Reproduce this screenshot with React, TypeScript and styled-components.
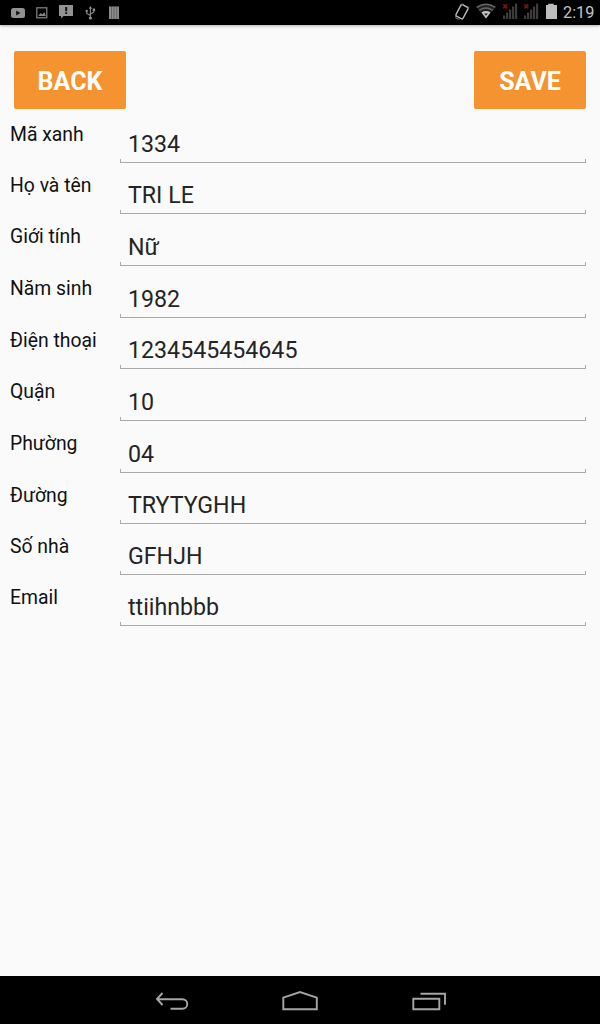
import React from "react";
import styled, { createGlobalStyle } from "styled-components";

const GlobalStyle = createGlobalStyle`
  *, *::before, *::after { box-sizing: border-box; }
  body { margin: 0; background: #fafafa; }
`;

const Screen = styled.div`
  display: flex;
  flex-direction: column;
  width: 600px;
  height: 1024px;
  background: #fafafa;
  font-family: Roboto, sans-serif;
`;

const StatusBar = styled.header`
  display: flex;
  justify-content: space-between;
  flex: none;
  height: 25px;
  background: #000;
  box-shadow: 0 1px 3px rgba(0, 0, 0, 0.3);
`;

const StatusIcons = styled.svg`
  display: block;
  height: 25px;
`;

const StatusGroup = styled.div`
  display: flex;
`;

const Clock = styled.span`
  width: 37px;
  color: #c4c4c4;
  font-size: 16.3px;
  line-height: 25px;
`;

const Toolbar = styled.div`
  display: flex;
  justify-content: space-between;
  padding: 26px 14px 3px;
`;

const ActionButton = styled.button`
  width: 112px;
  height: 58px;
  padding: 3px 0 0;
  border: 0;
  border-radius: 2px;
  background: #f59331;
  color: #fff;
  font: 700 25px/30px Roboto, sans-serif;
`;

const Form = styled.main`
  flex: 1;
`;

const Row = styled.div<{ $height: number }>`
  display: flex;
  height: ${(p) => p.$height}px;
  padding: 0 14px 0 10px;
`;

const Label = styled.label`
  width: 110px;
  padding-top: 11px;
  color: #111;
  font-size: 19.35px;
  line-height: 24px;
  white-space: nowrap;
`;

const Field = styled.div`
  display: flex;
  flex: 1;
  flex-direction: column;
  justify-content: flex-end;
`;

const Value = styled.span`
  padding: 0 0 1px 8px;
  color: #242424;
  font-size: 23.2px;
  line-height: 28px;
  white-space: nowrap;
`;

const Underline = styled.span`
  height: 4px;
  border: 1px solid #a9a9a9;
  border-top: 0;
`;

const NavBar = styled.nav`
  display: flex;
  justify-content: center;
  flex: none;
  height: 48px;
  background: #000;
`;

const NavIcons = styled.svg`
  display: block;
  fill: none;
  stroke: #a6a6a6;
  stroke-width: 1.9;
`;

const fields = [
  { label: "Mã xanh", value: "1334", height: 51 },
  { label: "Họ và tên", value: "TRI LE", height: 51 },
  { label: "Giới tính", value: "Nữ", height: 52 },
  { label: "Năm sinh", value: "1982", height: 52 },
  { label: "Điện thoại", value: "1234545454645", height: 51 },
  { label: "Quận", value: "10", height: 52 },
  { label: "Phường", value: "04", height: 52 },
  { label: "Đường", value: "TRYTYGHH", height: 51 },
  { label: "Số nhà", value: "GFHJH", height: 51 },
  { label: "Email", value: "ttiihnbbb", height: 51 },
];

const bars = [0, 3, 6, 9, 12];

function Signal({ x }: { x: number }) {
  return (
    <g transform={`translate(${x} 0)`}>
      {bars.map((b, i) => (
        <rect key={b} x={b + 1} y={15.5 - i * 3} width="2.2" height={3.5 + i * 3} fill="#3c3c3c" />
      ))}
      <path d="M1.3 4.3l4 4M5.3 4.3l-4 4" stroke="#7c1010" strokeWidth="1.7" />
    </g>
  );
}

export default function App() {
  return (
    <>
      <GlobalStyle />
      <Screen>
        <StatusBar>
          <StatusIcons width="130" viewBox="0 0 130 25">
            <rect x="11" y="8" width="14" height="10" rx="2.5" fill="#929292" />
            <path d="M16.2 10.4v5.2l4.2-2.6z" fill="#111" />
            <rect x="36.8" y="7.8" width="10" height="10" fill="none" stroke="#858585" strokeWidth="1.2" />
            <path d="M38.3 16l2.2-3 1.8 1.6 2.1-2.4 1.4 3.8z" fill="#858585" />
            <path d="M59 5h14v11H63.5L61 18.5V16h-2z" fill="#929292" />
            <path d="M65.2 7h2v4.3h-2zM65.2 12.3h2v1.8h-2z" fill="#111" />
            <path d="M90.4 18V8M90.4 15.5l-3.7-2v-2.3M90.4 14l3.5-2v-2" fill="none" stroke="#8c8c8c" strokeWidth="1.1" />
            <path d="M88.7 8.8l1.7-2.8 1.7 2.8zM92.7 8.5h2.4v2.4h-2.4z" fill="#8c8c8c" />
            <circle cx="86.7" cy="11" r="1.2" fill="#8c8c8c" />
            <circle cx="90.4" cy="18" r="1.6" fill="#8c8c8c" />
            <rect x="109" y="6.5" width="10" height="12.5" fill="#8c8c8c" />
            <path d="M111.5 6.5V19M114 6.5V19M116.7 6.5V19" stroke="#4c4c4c" strokeWidth=".6" />
          </StatusIcons>
          <StatusGroup>
            <StatusIcons width="113" viewBox="450 0 113 25">
              <rect x="458" y="5.2" width="8" height="13" rx="1.2" transform="rotate(28 462 11.7)" fill="none" stroke="#c0c0c0" strokeWidth="1.4" />
              <path d="M460.5 4.8l3-.8M455.5 15l.6 3.5 3.5.8M468.4 9l-.6-3" fill="none" stroke="#777" strokeWidth="1" />
              <path d="M486 18.5l-9.5-11.1q9.5-6.5 19 0z" fill="#222" />
              <path d="M476.7 7.3q9.3-6 18.6 0M479.3 10.3q6.7-4.5 13.4 0" fill="none" stroke="#666" strokeWidth="1.5" />
              <path d="M481.5 12.4q4.5-2.7 9 0L486 18.5z" fill="#c7c7c7" />
              <path d="M484 13.4h4l-2 2.4z" fill="#222" />
              <Signal x={502} />
              <Signal x={523} />
              <path d="M546 5h2.2V3.7h5.5V5h3.3v14h-11z" fill="#bdbdbd" />
            </StatusIcons>
            <Clock>2:19</Clock>
          </StatusGroup>
        </StatusBar>
        <Toolbar>
          <ActionButton>BACK</ActionButton>
          <ActionButton>SAVE</ActionButton>
        </Toolbar>
        <Form>
          {fields.map((f) => (
            <Row key={f.label} $height={f.height}>
              <Label>{f.label}</Label>
              <Field>
                <Value>{f.value}</Value>
                <Underline />
              </Field>
            </Row>
          ))}
        </Form>
        <NavBar>
          <NavIcons width="320" height="48" viewBox="140 976 320 48">
            <path d="M162.5 993l-5.5 6 5.5 6M157 999.2h25.5a4.8 4.8 0 0 1 0 9.6h-12" />
            <path d="M283.3 1009.2v-11.5l16.7-5.6 16.8 5.6v11.5z" />
            <path d="M413.3 998.8h26v10.4h-26zM420.5 993.8h24.5v11" />
          </NavIcons>
        </NavBar>
      </Screen>
    </>
  );
}
